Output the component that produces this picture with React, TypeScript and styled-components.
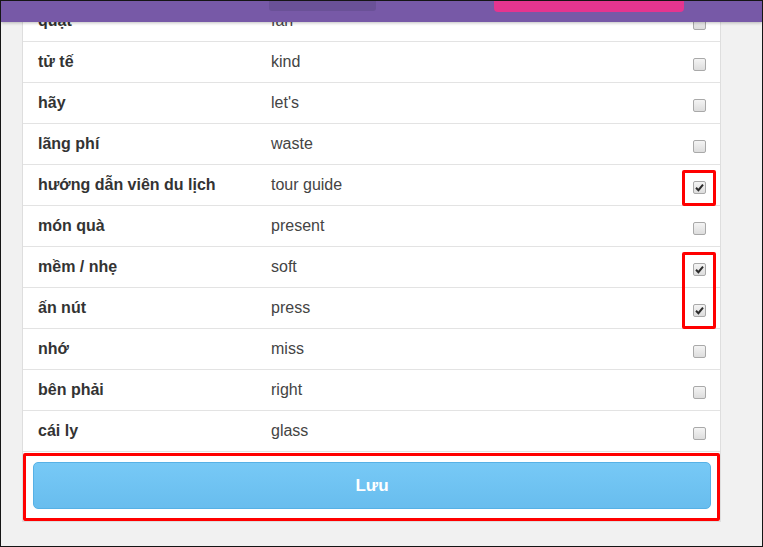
import React from "react";
import styled, { createGlobalStyle } from "styled-components";

const GlobalStyle = createGlobalStyle`
  html, body {
    margin: 0;
    padding: 0;
    background: #f1f1f1;
  }
  * {
    box-sizing: border-box;
  }
`;

const words = [
  { vi: "quạt", en: "fan", checked: false },
  { vi: "tử tế", en: "kind", checked: false },
  { vi: "hãy", en: "let's", checked: false },
  { vi: "lãng phí", en: "waste", checked: false },
  { vi: "hướng dẫn viên du lịch", en: "tour guide", checked: true, mark: 1 },
  { vi: "món quà", en: "present", checked: false },
  { vi: "mềm / nhẹ", en: "soft", checked: true, mark: 2 },
  { vi: "ấn nút", en: "press", checked: true },
  { vi: "nhớ", en: "miss", checked: false },
  { vi: "bên phải", en: "right", checked: false },
  { vi: "cái ly", en: "glass", checked: false },
];

const Frame = styled.div`
  position: relative;
  width: 763px;
  height: 547px;
  overflow: hidden;
  border: 1px solid #151515;
  background: #f1f1f1;
  font-family: "Liberation Sans", Arial, sans-serif;
  color: #333;
`;

// sticky navbar sitting over the scrolled list
const TopBar = styled.div`
  position: absolute;
  top: 0;
  left: 0;
  right: 0;
  height: 21px;
  display: flex;
  align-items: flex-start;
  gap: 118px;
  padding-left: 268px;
  background: #7759a7;
  box-shadow: 0 1px 3px rgba(0, 0, 0, 0.25);
  z-index: 5;
`;

const NavTab = styled.div`
  width: 107px;
  height: 10px;
  background: #6a5197;
  border-radius: 0 0 3px 3px;
`;

const NavAction = styled.div`
  width: 190px;
  height: 11px;
  background: #e5358f;
  border-radius: 0 0 4px 4px;
`;

const Card = styled.div`
  margin-left: 21px;
  width: 699px;
  background: #fff;
  border: 1px solid #dedede;
  border-top: none;
`;

const Row = styled.div`
  position: relative;
  display: grid;
  grid-template-columns: 233px 1fr 13px;
  align-items: center;
  height: 41px;
  padding: 0 14px 0 15px;
  border-bottom: 1px solid #e3e3e3;
  font-size: 16px;
`;

const Word = styled.span`
  font-weight: bold;
  color: #333;
`;

const Meaning = styled.span`
  color: #444;
`;

const Box = styled.span<{ $checked: boolean }>`
  display: flex;
  align-items: center;
  justify-content: center;
  width: 13px;
  height: 13px;
  margin-top: 5px;
  border: 1px solid #a9a9a9;
  border-radius: 2px;
  background: linear-gradient(#f4f4f4, #dddddd);

  svg {
    display: ${(p) => (p.$checked ? "block" : "none")};
  }
`;

// red annotation frame drawn over the checkbox column
const Mark = styled.div<{ $rows: number }>`
  position: absolute;
  right: 4px;
  top: 5px;
  width: 34px;
  height: ${(p) => p.$rows * 41 - 5}px;
  border: 3px solid #ff0000;
  border-radius: 2px;
  z-index: 2;
`;

const SaveArea = styled.div`
  margin: 1px 0 0;
  padding: 6px 6px 9px 7px;
  border: 3px solid #ff0000;
  border-radius: 2px;
`;

const SaveButton = styled.button`
  display: block;
  width: 100%;
  height: 47px;
  border: 1px solid #56b1e6;
  border-radius: 5px;
  background: linear-gradient(#77c9f6, #68bdee);
  color: #fff;
  font-family: "Liberation Sans", Arial, sans-serif;
  font-size: 17px;
  font-weight: bold;
  cursor: pointer;
`;

function CheckBox({ checked }: { checked: boolean }) {
  return (
    <Box $checked={checked}>
      <svg width="9" height="9" viewBox="0 0 9 9">
        <path
          d="M1 4.8 L3.4 7.2 L8 1.6"
          fill="none"
          stroke="#2b2b2b"
          strokeWidth="2"
        />
      </svg>
    </Box>
  );
}

export default function App() {
  return (
    <>
      <GlobalStyle />
      <Frame>
        <TopBar>
          <NavTab />
          <NavAction />
        </TopBar>
        <Card>
          {words.map((w) => (
            <Row key={w.vi}>
              <Word>{w.vi}</Word>
              <Meaning>{w.en}</Meaning>
              <CheckBox checked={w.checked} />
              {w.mark && <Mark $rows={w.mark} />}
            </Row>
          ))}
          <SaveArea>
            <SaveButton>Lưu</SaveButton>
          </SaveArea>
        </Card>
      </Frame>
    </>
  );
}
